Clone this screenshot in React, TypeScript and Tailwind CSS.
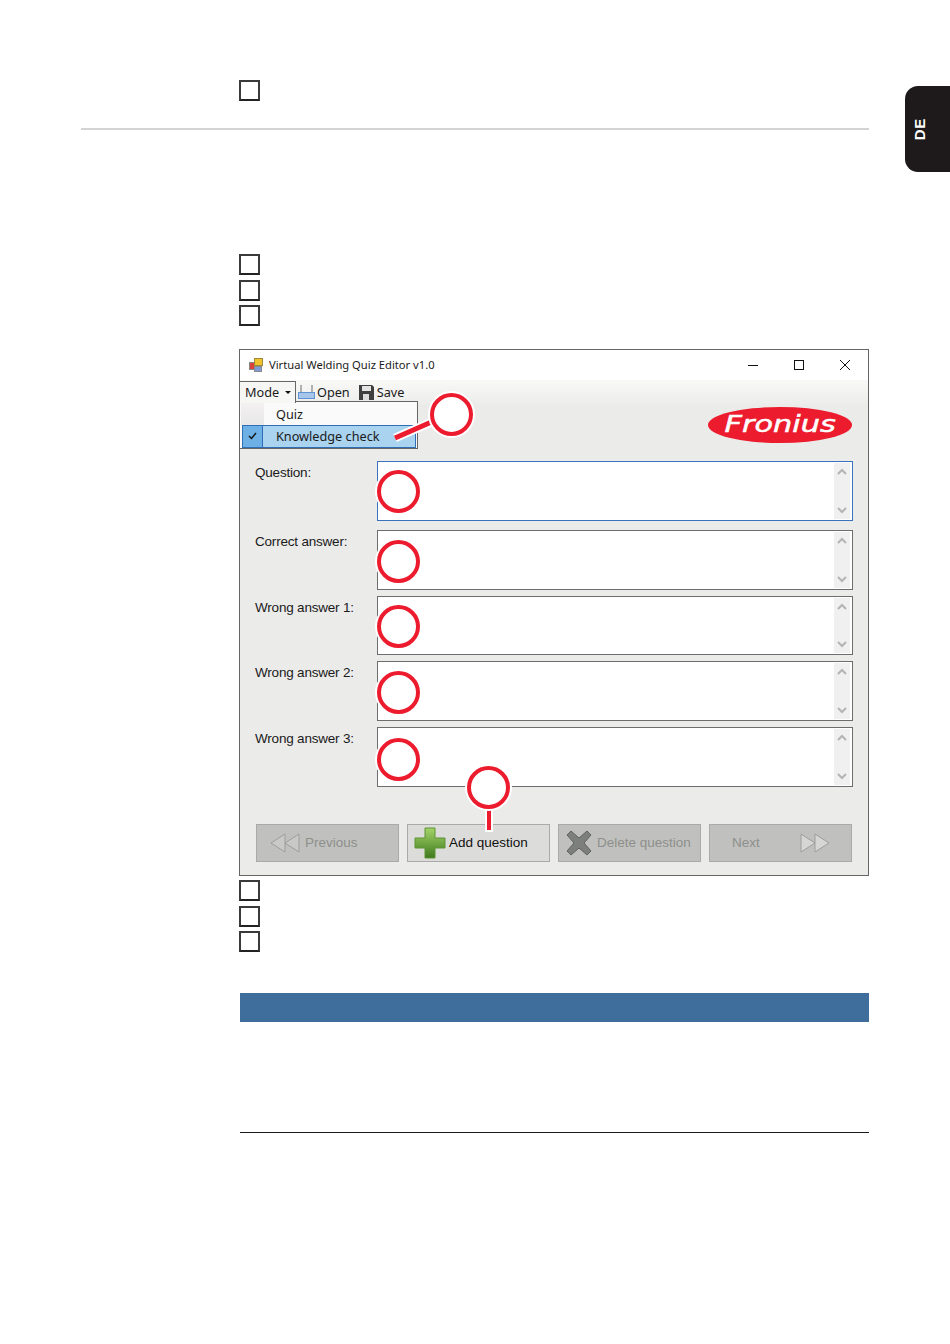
const sans = "font-['Liberation_Sans',Arial,sans-serif]"
const ui = "font-['Noto_Sans','Open_Sans',sans-serif]"

function Box() {
    return <div className="w-[21px] h-[21px] -ml-px border-2 border-[#3a3a3a] border-b-[#222222] bg-white"></div>
}

function Scrollbar() {
    return (
        <div className="flex flex-col justify-between items-center w-[16px] my-px mr-[2px] bg-[#f0f0f0] py-[5px]">
            <svg width="10" height="8" viewBox="0 0 10 8"><path d="M1 6 L5 2 L9 6" fill="none" stroke="#b4b4b4" strokeWidth="2" /></svg>
            <svg width="10" height="8" viewBox="0 0 10 8"><path d="M1 2 L5 6 L9 2" fill="none" stroke="#b4b4b4" strokeWidth="2" /></svg>
        </div>
    )
}

interface RowProps {
    label: string;
    height: string;
    margin: string;
    active?: boolean;
}

function Row({ label, height, margin, active }: RowProps) {
    return (
        <div className={"flex " + margin}>
            <div className={"w-[122px] pt-[3px] text-[13.5px] leading-[18px] text-[#1a1a1a] tracking-[-0.2px] " + sans}>{label}</div>
            <div className={"flex-1 flex justify-end bg-white border " + height + " " + (active ? "border-[#3a72bd]" : "border-[#6d6d6d]")}>
                <Scrollbar />
            </div>
        </div>
    )
}

function Rewind() {
    return (
        <svg width="30" height="20" viewBox="0 0 30 20">
            <path d="M1 10 L15 1 L15 19 Z" fill="#c9cac7" stroke="#9d9e9b" />
            <path d="M15 10 L29 1 L29 19 Z" fill="#c9cac7" stroke="#9d9e9b" />
        </svg>
    )
}

function Forward() {
    return (
        <svg width="30" height="20" viewBox="0 0 30 20">
            <path d="M1 1 L15 10 L1 19 Z" fill="#d6d7d4" stroke="#9d9e9b" />
            <path d="M15 1 L29 10 L15 19 Z" fill="#d6d7d4" stroke="#9d9e9b" />
        </svg>
    )
}

function Plus() {
    return (
        <svg width="32" height="32" viewBox="0 0 32 32">
            <defs>
                <linearGradient id="plusGreen" x1="0" y1="0" x2="0" y2="1">
                    <stop offset="0" stopColor="#a4d46a" />
                    <stop offset="1" stopColor="#3f7a1e" />
                </linearGradient>
            </defs>
            <path d="M11 1 H21 V11 H31 V21 H21 V31 H11 V21 H1 V11 H11 Z" fill="url(#plusGreen)" stroke="#5d9433" />
        </svg>
    )
}

function Cross() {
    return (
        <svg width="26" height="26" viewBox="0 0 26 26">
            <path d="M5 1 L13 8 L21 1 L25 5 L18 13 L25 21 L21 25 L13 18 L5 25 L1 21 L8 13 L1 5 Z" fill="#7d7f7c" stroke="#5f615e" />
        </svg>
    )
}

function Callout({ className }: { className: string }) {
    return <div className={"absolute w-[43px] h-[43px] rounded-full bg-white border-[4.5px] border-[#ec1c2e] ring-2 ring-white " + className}></div>
}

export default function App() {
    return (
        <div className={"relative w-[950px] h-[1344px] bg-white overflow-hidden " + sans}>
            {/* DE tab */}
            <div className="absolute left-[905px] top-[86px] w-[45px] h-[86px] bg-[#1e1a1b] rounded-l-[13px] flex items-center pl-[4px]">
                <span className="-rotate-90 text-white font-bold text-[15px] tracking-[0.5px]">DE</span>
            </div>

            <div className="pt-[80px] pl-[240px]">
                <Box />
            </div>
            <div className="ml-[81px] w-[788px] h-[2px] bg-[#d4d4d4] mt-[27px]"></div>

            <div className="pl-[240px] mt-[124px] flex flex-col gap-[4.6px]">
                <Box />
                <Box />
                <Box />
            </div>

            {/* quiz editor window */}
            <div className="relative ml-[239px] mt-[22.8px] w-[630px] h-[527px] border border-[#666666] bg-[#ebebea] flex flex-col">
                <div className={"h-[30px] bg-white flex items-center pl-[9px] text-[11.2px] text-[#1a1a1a] " + ui}>
                    <svg width="14" height="14" viewBox="0 0 14 14" className="mr-[6px]">
                        <rect x="0.5" y="4.5" width="5" height="7" fill="#d9413b" stroke="#8a8a8a" />
                        <rect x="5.5" y="0.5" width="8" height="7" fill="#f0c22e" stroke="#a08a3a" />
                        <rect x="5.5" y="8.5" width="7" height="5" fill="#7d9bd8" stroke="#8a8a8a" />
                    </svg>
                    <span>Virtual Welding Quiz Editor v1.0</span>
                    <div className="ml-auto flex items-center">
                        <svg width="12" height="12" viewBox="0 0 12 12" className="mr-[34px]"><path d="M1 6.5 H11" stroke="#111" /></svg>
                        <svg width="12" height="12" viewBox="0 0 12 12" className="mr-[34px]"><rect x="1.5" y="1.5" width="9" height="9" fill="none" stroke="#111" /></svg>
                        <svg width="12" height="12" viewBox="0 0 12 12" className="mr-[17px]"><path d="M1 1 L11 11 M11 1 L1 11" stroke="#111" /></svg>
                    </div>
                </div>

                <div className={"h-[24px] bg-gradient-to-b from-[#f9f9f8] to-[#ededec] flex items-start text-[12.7px] text-[#1a1a1a] " + ui}>
                    <div className="relative mt-px w-[56px] h-[22px] flex items-center pl-[5px] border-r border-t border-[#666666] bg-[#f6f6f5] z-20">
                        Mode
                        <span className="ml-[6px] w-0 h-0 border-x-[3px] border-x-transparent border-t-[3px] border-t-[#111]"></span>
                    </div>
                    <div className="h-[24px] flex items-center pt-[1px]">
                        <svg width="17" height="16" viewBox="0 0 17 16" className="ml-[2px] mr-[2px]">
                            <path d="M3 1 V9 M14 1 V9" stroke="#9a9a9a" strokeWidth="1.5" />
                            <rect x="0.5" y="8.5" width="16" height="6" fill="#a8c6ea" stroke="#5f93d3" />
                        </svg>
                        <span>Open</span>
                        <svg width="15" height="15" viewBox="0 0 15 15" className="ml-[9px] mr-[3px]">
                            <path d="M0 0 H13 L15 2 V15 H0 Z" fill="#3f3f3f" />
                            <rect x="3" y="1" width="9" height="5" fill="#e4e4e4" />
                            <rect x="4" y="9" width="6" height="6" fill="#dcdcdc" />
                        </svg>
                        <span>Save</span>
                    </div>
                </div>

                <div className="relative flex-1 px-[15px] pt-[57px]">
                    <div className="absolute left-[468px] top-[3px] w-[144px] h-[36px] rounded-[50%] bg-[#ec1c2e] flex items-center justify-center">
                        <span className="text-white italic text-[23px] leading-none scale-x-[1.32] [-webkit-text-stroke:0.5px_white] font-['DejaVu_Sans',sans-serif]">Fronius</span>
                    </div>
                    <div>
                        <Row label="Question:" height="h-[60px]" margin="" active />
                        <Row label="Correct answer:" height="h-[60px]" margin="mt-[9px]" />
                        <Row label="Wrong answer 1:" height="h-[59px]" margin="mt-[6px]" />
                        <Row label="Wrong answer 2:" height="h-[60px]" margin="mt-[6px]" />
                        <Row label="Wrong answer 3:" height="h-[60px]" margin="mt-[6px]" />
                    </div>
                    <div className="mt-[37px] grid grid-cols-4 gap-[8px] h-[38px] mx-[1px]">
                        <div className="bg-[#c0c1be] border border-[#aaaaa8] flex items-center pl-[13px] gap-[5px] text-[13.5px] text-[#8e8f8c]">
                            <Rewind />
                            <span className="pt-px">Previous</span>
                        </div>
                        <div className="bg-[#dcdcda] border border-[#aaaaa8] flex items-center pl-[6px] gap-[3px] text-[13.5px] text-[#111]">
                            <Plus />
                            <span className="pt-px">Add question</span>
                        </div>
                        <div className="bg-[#c0c1be] border border-[#aaaaa8] flex items-center pl-[7px] gap-[5px] text-[13.5px] text-[#8e8f8c]">
                            <Cross />
                            <span className="pt-px">Delete question</span>
                        </div>
                        <div className="bg-[#c0c1be] border border-[#aaaaa8] flex items-center pl-[22px] text-[13.5px] text-[#8e8f8c]">
                            <span className="pt-px">Next</span>
                            <span className="ml-[40px]"><Forward /></span>
                        </div>
                    </div>
                </div>

                {/* dropdown menu */}
                <div className={"absolute left-0 top-[51px] w-[178px] h-[48px] border-y border-r border-[#666666] bg-[#fbfafa] text-[12.7px] text-[#1a1a1a] z-10 " + ui}>
                    <div className="h-[23px] flex items-center">
                        <div className="ml-px w-[23px] h-full bg-gradient-to-b from-[#f4f1f1] to-[#e8e8e8]"></div>
                        <span className="ml-[12px] pt-[2px]">Quiz</span>
                    </div>
                    <div className="ml-[2px] mr-px h-[23px] bg-[#a9d3ee] border border-[#2f6db5] flex items-center">
                        <div className="w-[20px] h-full bg-[#6cb0e6] border-r border-[#2f6db5] flex items-center justify-center">
                            <svg width="9" height="8" viewBox="0 0 9 8"><path d="M1 4 L3.5 6.5 L8 1" fill="none" stroke="#111" strokeWidth="1.4" /></svg>
                        </div>
                        <span className="ml-[13px]">Knowledge check</span>
                    </div>
                </div>

                {/* callouts */}
                <svg width="70" height="40" viewBox="0 0 70 40" className="absolute left-[150px] top-[60px] z-20">
                    <path d="M5 28 L46 10" stroke="#ffffff" strokeWidth="9" />
                    <path d="M5 28 L46 10" stroke="#ec1c2e" strokeWidth="5" />
                </svg>
                <Callout className="left-[190px] top-[43px] z-20" />
                <Callout className="left-[137px] top-[120px] z-20" />
                <Callout className="left-[137px] top-[190px] z-20" />
                <Callout className="left-[137px] top-[255px] z-20" />
                <Callout className="left-[137px] top-[321px] z-20" />
                <Callout className="left-[137px] top-[388px] z-20" />
                <div className="absolute left-[245px] top-[454px] w-[8px] h-[28px] bg-white border-x-2 border-white z-20">
                    <div className="w-[4px] h-[26px] bg-[#ec1c2e]"></div>
                </div>
                <Callout className="left-[227px] top-[416px] z-20" />
            </div>

            <div className="pl-[240px] mt-[4px] flex flex-col gap-[4.6px]">
                <Box />
                <Box />
                <Box />
            </div>

            <div className="ml-[240px] mt-[40.8px] w-[629px] h-[29px] bg-[#406e9c]"></div>
            <div className="ml-[240px] mt-[110px] w-[629px] h-px bg-[#1a1a1a]"></div>
        </div>
    )
}
